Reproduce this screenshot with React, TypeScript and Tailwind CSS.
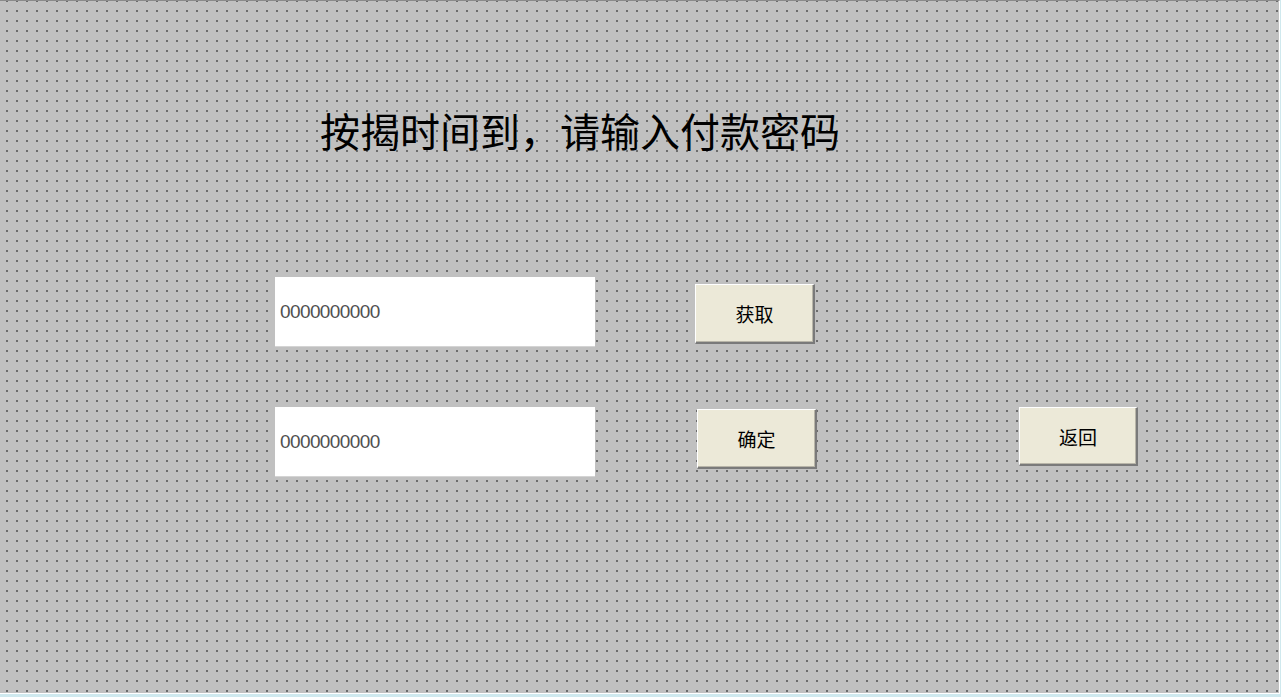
import React from "react"

const cjk = { fontFamily: '"Noto Sans CJK SC", "Noto Sans", sans-serif' }

function Field({ value }: { value: string }) {
  return (
    <div className="w-[320px] h-[70px] bg-white border-b border-[#d4d4d4] flex items-center pl-[5px] shrink-0">
      <span
        className="text-[19px] tracking-[-0.6px] text-[#505050] leading-none"
        style={{ fontFamily: '"Liberation Sans", Arial, sans-serif' }}
      >
        {value}
      </span>
    </div>
  )
}

function Button({ label, className }: { label: string; className: string }) {
  return (
    <button
      className={`shrink-0 bg-[#ece9d8] border-t border-l border-white border-b-2 border-r-2 border-b-[#7a7a7a] border-r-[#7a7a7a] shadow-[inset_-1px_-1px_0_#b8b5a8] flex items-center justify-center text-[19px] text-black leading-none ${className}`}
      style={cjk}
    >
      {label}
    </button>
  )
}

export default function App() {
  return (
    <div className="w-[1281px] h-[697px] bg-[#cfe9ee] overflow-hidden">
      <div className="w-[1280px] h-[694px] border-t border-[#8a8a8a] border-r border-b border-r-white border-b-white bg-[#c0c0c0] bg-[conic-gradient(at_2px_2px,transparent_75%,#6c6c6c_0)] bg-size-[10px_10px] bg-position-[6px_9px] flex flex-col">
        {/* Title */}
        <div className="pl-[320px] pt-[109px]">
          <h1 className="text-[40px] leading-none text-black font-normal whitespace-nowrap" style={cjk}>
            按揭时间到，请输入付款密码
          </h1>
        </div>

        {/* Row 1 */}
        <div className="flex items-start pl-[275px] mt-[127px]">
          <Field value="0000000000" />
          <Button label="获取" className="ml-[100px] mt-[7px] w-[120px] h-[60px]" />
        </div>

        {/* Row 2 */}
        <div className="flex items-start pl-[275px] mt-[60px]">
          <Field value="0000000000" />
          <Button label="确定" className="ml-[102px] mt-[2px] w-[120px] h-[60px]" />
          <Button label="返回" className="ml-[202px] w-[119px] h-[59px]" />
        </div>
      </div>
    </div>
  )
}
